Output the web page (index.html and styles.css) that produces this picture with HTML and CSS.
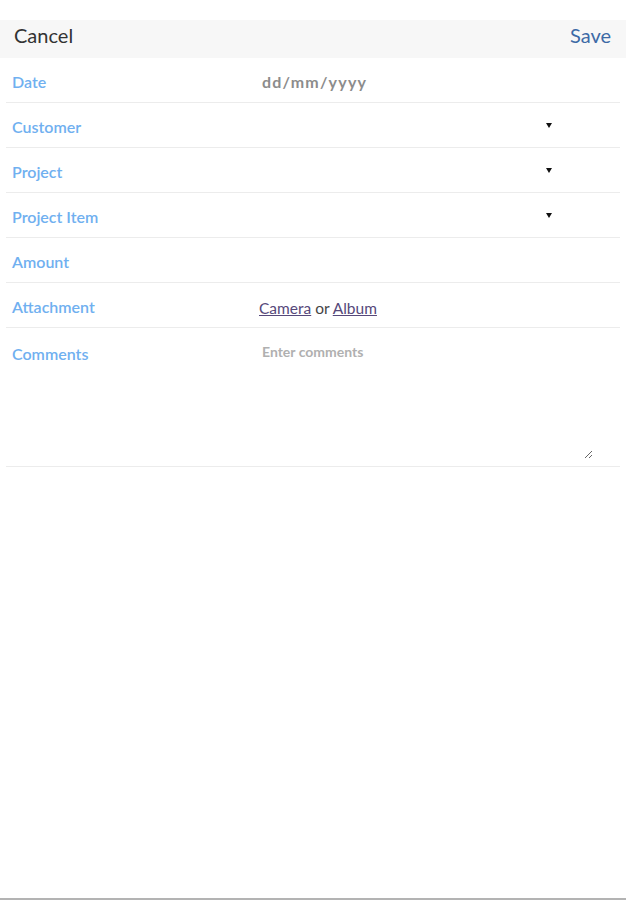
FILE: index.html
```html
<!DOCTYPE html>
<html lang="en">
<head>
    <meta charset="UTF-8">
    <meta name="viewport" content="width=device-width, initial-scale=1.0">
    <title>New Expense</title>
    <link rel="stylesheet" href="styles.css">
</head>
<body>

<header class="topbar">
    <a href="#" class="btn-cancel">Cancel</a>
    <a href="#" class="btn-save">Save</a>
</header>

<main class="form">
    <div class="row">
        <label class="label">Date</label>
        <div class="value date-value">dd/mm/yyyy</div>
    </div>
    <div class="row">
        <label class="label">Customer</label>
        <div class="value select"><span class="caret"></span></div>
    </div>
    <div class="row">
        <label class="label">Project</label>
        <div class="value select"><span class="caret"></span></div>
    </div>
    <div class="row">
        <label class="label">Project Item</label>
        <div class="value select"><span class="caret"></span></div>
    </div>
    <div class="row">
        <label class="label">Amount</label>
        <div class="value"></div>
    </div>
    <div class="row">
        <label class="label">Attachment</label>
        <div class="value attach"><a href="#">Camera</a> or <a href="#">Album</a></div>
    </div>
    <div class="row row-comments">
        <label class="label">Comments</label>
        <textarea class="comments" placeholder="Enter comments"></textarea>
    </div>
</main>

<footer class="bottom-bar"></footer>

</body>
</html>
```

FILE: styles.css
```css
html, body {
    height: 100%;
}
body {
    margin: 0;
    padding: 0;
    background-color: #fff;
    font-family: Lato, "Open Sans", sans-serif;
    display: flex;
    flex-direction: column;
    min-height: 100vh;
}
.topbar {
    margin-top: 20px;
    height: 38px;
    box-sizing: border-box;
    background-color: #f7f7f7;
    display: flex;
    justify-content: space-between;
    align-items: center;
    padding: 0 15px 9px 14px;
}
.topbar a {
    text-decoration: none;
    font-size: 20px;
}
.btn-cancel {
    color: #333;
}
.btn-save {
    color: #3d6aa6;
}
.form {
    flex: 1;
    padding: 0 6px;
}
.row {
    display: flex;
    align-items: center;
    height: 44px;
    border-bottom: 1px solid #ececec;
}
.label {
    width: 250px;
    padding-left: 6px;
    font-size: 16px;
    font-weight: 600;
    color: #70b0f0;
    padding-top: 3px;
}
.value {
    flex: 1;
    font-size: 15.5px;
    color: #555;
    padding-top: 5px;
}
.date-value {
    padding-top: 2px;
    font-size: 16px;
    font-weight: bold;
    color: #8c8c8c;
    letter-spacing: 1.2px;
}
.select {
    height: 5px;
    position: relative;
    padding-top: 0;
}
.caret {
    position: absolute;
    left: 284px;
    top: 0;
    width: 0;
    height: 0;
    border-left: 3px solid transparent;
    border-right: 3px solid transparent;
    border-top: 5px solid #111;
}
.attach {
    margin-left: -3px;
    color: #444;
}
.attach a {
    color: #56487a;
}
.row-comments {
    height: 138px;
    align-items: flex-start;
}
.row-comments .label {
    padding-top: 16px;
}
.comments {
    flex: 1;
    margin: 15px 27px 3px 0;
    height: 116px;
    border: none;
    outline: none;
    padding: 0;
    font-family: Lato, "Open Sans", sans-serif;
    font-size: 14px;
    font-weight: bold;
    color: #444;
}
.comments::placeholder {
    color: #b0b0b0;
}
.bottom-bar {
    height: 2px;
    background-color: #b3b3b3;
}
```
